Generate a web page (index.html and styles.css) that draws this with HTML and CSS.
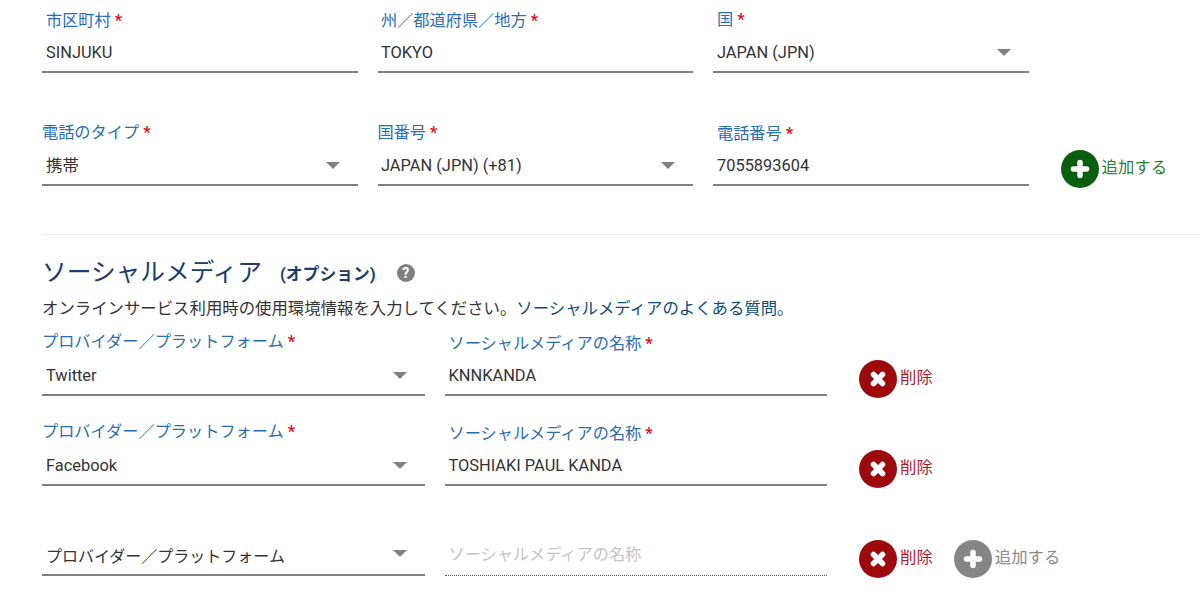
FILE: index.html
```html
<!DOCTYPE html>
<html lang="ja">
<head>
<meta charset="utf-8">
<title>ソーシャルメディア</title>
<link rel="stylesheet" href="styles.css">
</head>
<body>
<form class="form">
  <div class="row row-address">
    <div class="field col-3"><label class="label inset mb2">市区町村 <b class="req">*</b></label><div class="value">SINJUKU</div></div>
    <div class="field col-3"><label class="label inset-s mb2">州／都道府県／地方 <b class="req">*</b></label><div class="value value-s">TOKYO</div></div>
    <div class="field col-3"><label class="label inset mb3">国 <b class="req">*</b></label><div class="value select">JAPAN (JPN)<i class="caret"></i></div></div>
  </div>
  <div class="row row-phone">
    <div class="field col-3"><label class="label mb3">電話のタイプ <b class="req">*</b></label><div class="value select">携帯<i class="caret"></i></div></div>
    <div class="field col-3"><label class="label mb3">国番号 <b class="req">*</b></label><div class="value value-s select">JAPAN (JPN) (+81)<i class="caret"></i></div></div>
    <div class="field col-3"><label class="label inset mb2">電話番号 <b class="req">*</b></label><div class="value">7055893604</div></div>
    <div class="action action-green action-phone">
      <svg class="icon" viewBox="0 0 38 38"><circle cx="19" cy="19" r="19"/><path class="glyph" d="M19 12.5v13M12.5 19h13"/></svg><span>追加する</span>
    </div>
  </div>
  <hr class="divider">
  <h2 class="title">ソーシャルメディア<small class="optional">(オプション)</small><span class="help">?</span></h2>
  <p class="desc">オンラインサービス利用時の使用環境情報を入力してください。<a class="link">ソーシャルメディアのよくある質問。</a></p>
  <div class="row row-social-1">
    <div class="field col-2"><label class="label mb4">プロバイダー／プラットフォーム <b class="req">*</b></label><div class="value select">Twitter<i class="caret"></i></div></div>
    <div class="field col-2"><label class="label inset mb2">ソーシャルメディアの名称 <b class="req">*</b></label><div class="value">KNNKANDA</div></div>
    <div class="action action-red action-social">
      <svg class="icon" viewBox="0 0 38 38"><circle cx="19" cy="19" r="19"/><path class="glyph" d="M14.5 14.5l9 9M23.5 14.5l-9 9"/></svg><span>削除</span>
    </div>
  </div>
  <div class="row row-social-2">
    <div class="field col-2"><label class="label mb4">プロバイダー／プラットフォーム <b class="req">*</b></label><div class="value select">Facebook<i class="caret"></i></div></div>
    <div class="field col-2"><label class="label inset mb2">ソーシャルメディアの名称 <b class="req">*</b></label><div class="value">TOSHIAKI PAUL KANDA</div></div>
    <div class="action action-red action-social">
      <svg class="icon" viewBox="0 0 38 38"><circle cx="19" cy="19" r="19"/><path class="glyph" d="M14.5 14.5l9 9M23.5 14.5l-9 9"/></svg><span>削除</span>
    </div>
  </div>
  <div class="row row-social-3">
    <div class="field col-2"><div class="value select value-low">プロバイダー／プラットフォーム<i class="caret caret-high"></i></div></div>
    <div class="field col-2"><div class="value placeholder">ソーシャルメディアの名称</div></div>
    <div class="action action-red action-social">
      <svg class="icon" viewBox="0 0 38 38"><circle cx="19" cy="19" r="19"/><path class="glyph" d="M14.5 14.5l9 9M23.5 14.5l-9 9"/></svg><span>削除</span>
    </div>
    <div class="action action-gray">
      <svg class="icon" viewBox="0 0 38 38"><circle cx="19" cy="19" r="19"/><path class="glyph" d="M19 12.5v13M12.5 19h13"/></svg><span>追加する</span>
    </div>
  </div>
</form>
</body>
</html>
```
FILE: styles.css
```css
* { box-sizing: border-box; }
html, body { margin: 0; padding: 0; background: #fff; }
body {
  width: 1200px;
  height: 612px;
  overflow: hidden;
  font-family: Roboto, "Noto Sans CJK JP", sans-serif;
  font-size: 16.4px;
  color: #333;
}
.form { padding-left: 42px; }
.row { display: flex; gap: 20px; align-items: flex-end; }
.row-address { height: 73px; }
.row-phone { margin-top: 40px; height: 73px; }
.row-social-1 { margin-top: 9px; }
.row-social-2 { margin-top: 0; height: 90px; }
.row-social-3 { height: 90px; }
.field { display: flex; flex-direction: column; flex: none; }
.col-3 { width: 315.5px; }
.col-2 { width: 382.5px; }
.label {
  display: block;
  height: 24px;
  line-height: 24px;
  font-size: 16.2px;
  color: #2b6cb5;
  white-space: nowrap;
}
.mb2 { margin-bottom: 2px; }
.mb3 { margin-bottom: 3px; }
.mb4 { margin-bottom: 4px; }
.inset { padding-left: 4px; }
.inset-s { padding-left: 3.5px; }
.req { color: #e0101c; font-weight: 700; }
.value {
  position: relative;
  height: 38px;
  padding: 6px 0 0 4px;
  line-height: 24px;
  border-bottom: 2px solid #808080;
  white-space: nowrap;
}
.value-s { padding-left: 3.5px; }
.value-low { padding-top: 7px; font-size: 16px; }
.caret {
  position: absolute;
  right: 18px;
  top: 14px;
  width: 0;
  height: 0;
  border-left: 7px solid transparent;
  border-right: 7px solid transparent;
  border-top: 7px solid #808080;
}
.caret-high { top: 12px; }
.placeholder {
  color: #c4c4c4;
  padding-top: 5px;
  font-size: 16.2px;
  border-bottom: 1px dotted #555;
}
.action {
  display: flex;
  align-items: center;
  gap: 3px;
  flex: none;
  line-height: 24px;
}
.action-phone { margin-left: 12px; margin-bottom: -2px; }
.action-social { margin-left: 12px; margin-bottom: -2px; }
.action span { margin-bottom: 2px; }
.icon { width: 38px; height: 38px; display: block; flex: none; }
.glyph { fill: none; stroke: #fff; stroke-width: 5.5px; stroke-linecap: round; }
.action-green { color: #2e7d32; }
.action-green .icon circle { fill: #0b5d0f; }
.action-red { color: #a81c24; }
.action-red .icon circle { fill: #9c0a0e; }
.action-gray { color: #8a8a8a; margin-left: 1px; margin-bottom: -2px; }
.action-gray .icon circle { fill: #858585; }
.divider {
  margin: 48px 0 0;
  height: 1px;
  border: 0;
  background: #e6e6e6;
}
.title {
  display: flex;
  align-items: center;
  margin: 15px 0 0;
  height: 40px;
  font-size: 24.7px;
  font-weight: 400;
  color: #1c3d6b;
  white-space: nowrap;
}
.optional {
  margin: 6px 0 0 18px;
  font-size: 16.8px;
  font-weight: 700;
  color: #1c3d6b;
}
.help {
  width: 18px;
  height: 18px;
  margin: 6px 0 0 21px;
  border-radius: 50%;
  background: #808080;
  color: #fff;
  font-size: 14px;
  font-weight: 700;
  line-height: 18px;
  text-align: center;
}
.desc {
  margin: 7px 0 0;
  height: 24px;
  line-height: 24px;
  white-space: nowrap;
}
.link { color: #0f4c75; }
```
